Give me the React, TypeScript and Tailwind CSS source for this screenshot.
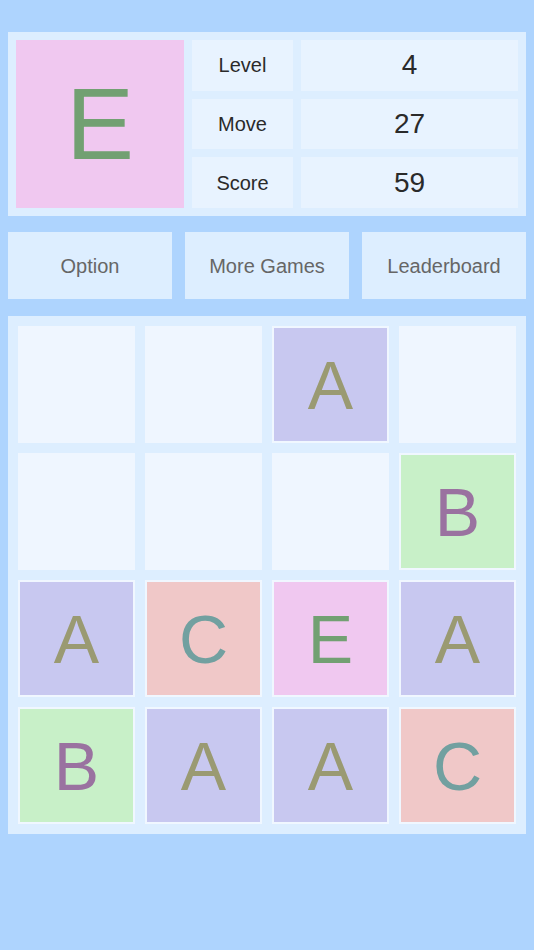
const TILE: Record<string, string> = {
  A: 'bg-[#c8c8f0] text-[#9a9a72]',
  B: 'bg-[#c8f0c8] text-[#9a72a0]',
  C: 'bg-[#f0c8c8] text-[#72a0a0]',
  E: 'bg-[#f0c8f0] text-[#72a072]',
};

const board = [
  ['', '', 'A', ''],
  ['', '', '', 'B'],
  ['A', 'C', 'E', 'A'],
  ['B', 'A', 'A', 'C'],
];

const stats = [
  ['Level', '4'],
  ['Move', '27'],
  ['Score', '59'],
];

export default function App() {
  return (
    <div
      className="min-h-[950px] w-[534px] bg-[#aed4fe] px-2 pt-8"
      style={{ fontFamily: '"Liberation Sans", Arial, sans-serif' }}
    >
      <div className="flex gap-2 bg-[#ddeeff] p-2">
        <div className="flex h-[168px] w-[168px] items-center justify-center bg-[#f0c8f0] text-[102px] leading-none text-[#72a072]">
          E
        </div>
        <div className="flex flex-1 flex-col gap-2">
          {stats.map(([label, value]) => (
            <div key={label} className="flex flex-1 gap-2">
              <div className="flex w-[101px] items-center justify-center bg-[#e8f3ff] text-[20px] text-[#2a2a2a]">
                {label}
              </div>
              <div className="flex flex-1 items-center justify-center bg-[#e8f3ff] text-[28px] text-[#2a2a2a]">
                {value}
              </div>
            </div>
          ))}
        </div>
      </div>

      <div className="mt-4 flex gap-[13px]">
        {['Option', 'More Games', 'Leaderboard'].map((b) => (
          <div
            key={b}
            className="flex h-[67px] flex-1 items-center justify-center bg-[#ddeeff] text-[20px] text-[#666]"
          >
            {b}
          </div>
        ))}
      </div>

      <div className="mt-[17px] grid grid-cols-4 gap-[10px] bg-[#ddeeff] p-[10px]">
        {board.flat().map((t, i) =>
          t ? (
            <div key={i} className="h-[117px] border-2 border-[#f0f7ff]">
              <div
                className={`flex h-full items-center justify-center text-[68px] leading-none ${TILE[t]}`}
              >
                {t}
              </div>
            </div>
          ) : (
            <div key={i} className="h-[117px] bg-[#eff6ff]" />
          ),
        )}
      </div>
    </div>
  );
}
